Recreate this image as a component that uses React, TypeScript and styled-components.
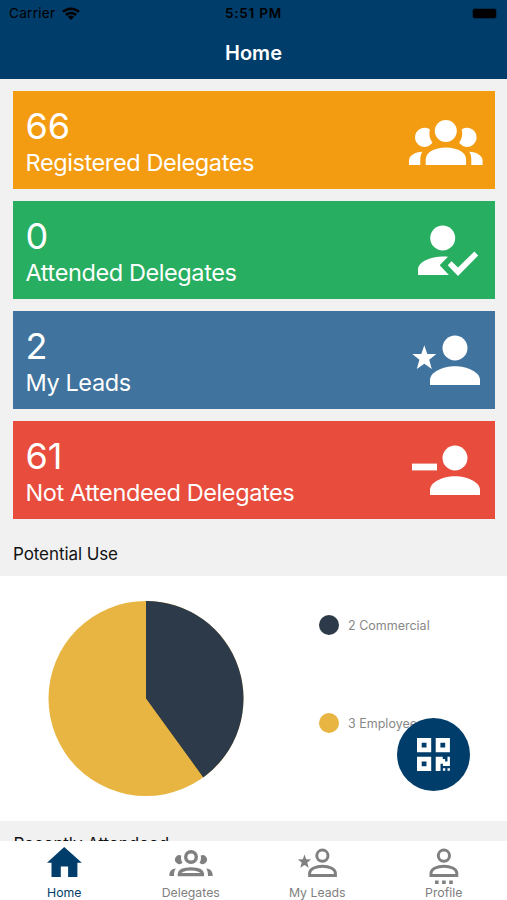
import React from "react";
import styled, { createGlobalStyle } from "styled-components";

const GlobalStyle = createGlobalStyle`
  * {
    box-sizing: border-box;
  }

  body {
    margin: 0;
    font-family: Inter, "Liberation Sans", sans-serif;
    background: #f1f1f1;
  }
`;

const PersonBody = "M23 55V50C23 42 36 36.2 48 36.2S73 42 73 50V55Z";

const GroupIcon = () => (
  <CardIcon viewBox="0 0 80 60">
    <circle cx="38.8" cy="21" r="11" />
    <path d="M18.7 55V49.5C18.7 42.5 27.7 37.6 38.9 37.6S59.1 42.5 59.1 49.5V55Z" />
    <path d="M22.3 19A9.6 9.6 0 1 0 24.8 33.6L25.3 32.4C22.7 28.6 21.6 24.3 22.9 19.4Z" />
    <path d="M55.3 19A9.6 9.6 0 1 1 52.8 33.6L52.3 32.4C54.9 28.6 56 24.3 54.7 19.4Z" />
    <path d="M2 55V50.5C2 45.5 8 42 15.3 41.7C13.6 44.2 13.3 47 13.3 50V55Z" />
    <path d="M75.6 55V50.5C75.6 45.5 69.6 42 62.3 41.7C64 44.2 64.3 47 64.3 50V55Z" />
  </CardIcon>
);

const AttendedIcon = () => (
  <CardIcon viewBox="0 0 80 60">
    <circle cx="35.7" cy="18" r="12.5" />
    <path d="M11 55V50C11 41.5 24 35.8 41 36.7L32.7 45.3L41.9 55Z" />
    <path d="M44.6 41.2L51 47.4L67.3 31.6L71.2 35.5L51 56L40.7 45.3Z" />
  </CardIcon>
);

const LeadsIcon = () => (
  <CardIcon viewBox="0 0 80 60">
    <circle cx="48" cy="18" r="12.5" />
    <path d={PersonBody} />
    <path d="M17.3 15.3L20.3 23.9L29.3 24.1L22.2 29.7L24.8 39.1L17.3 33.7L9.8 39.1L12.4 29.7L5.3 24.1L14.3 23.9Z" />
  </CardIcon>
);

const NotAttendedIcon = () => (
  <CardIcon viewBox="0 0 80 60">
    <circle cx="48" cy="18" r="12.5" />
    <path d={PersonBody} />
    <rect x="5" y="23.6" width="25" height="6.8" />
  </CardIcon>
);

const HomeTabIcon = () => (
  <TabIcon viewBox="0 0 48 40">
    <path d="M24.2 2L41.8 17.7H37.4V32H28.1V21.4H20.8V32H11.5V17.7H7Z" />
  </TabIcon>
);

const DelegatesTabIcon = () => (
  <TabIcon viewBox="0 0 48 40">
    <circle cx="24" cy="12" r="5.3" fill="none" stroke="currentColor" strokeWidth="3.4" />
    <path
      d="M12.3 29.6V28.6C12.7 25.7 17.7 23.9 23.9 23.9S35.1 25.7 35.5 28.6V29.6Z"
      fill="none"
      stroke="currentColor"
      strokeWidth="3.2"
    />
    <path d="M14.3 10.4A4.5 4.5 0 1 0 15.6 17.8C14.1 15.6 13.6 13 14.3 10.4Z" />
    <path d="M33.7 10.4A4.5 4.5 0 1 1 32.4 17.8C33.9 15.6 34.4 13 33.7 10.4Z" />
    <path d="M2.4 31V29.4C2.4 26 5.1 23.6 8.9 23.4C7.2 25.3 7 28 7 31Z" />
    <path d="M45.6 31V29.4C45.6 26 42.9 23.6 39.1 23.4C40.8 25.3 41 28 41 31Z" />
  </TabIcon>
);

const LeadsTabIcon = () => (
  <TabIcon viewBox="0 0 48 40">
    <circle cx="29.4" cy="10.7" r="5.6" fill="none" stroke="currentColor" strokeWidth="3" />
    <path
      d="M16.6 30.4V28C16.8 23.8 23 21.2 29.5 21.2S42.2 23.8 42.4 28V30.4Z"
      fill="none"
      stroke="currentColor"
      strokeWidth="3"
    />
    <path d="M11.5 9.6L13.2 14.3L18.2 14.5L14.3 17.6L15.7 22.8L11.5 19.9L7.3 22.8L8.7 17.6L4.8 14.5L9.8 14.3Z" />
  </TabIcon>
);

const ProfileTabIcon = () => (
  <TabIcon viewBox="0 0 48 40">
    <circle cx="23.9" cy="10.7" r="5.6" fill="none" stroke="currentColor" strokeWidth="3" />
    <path
      d="M11 30.4V28C11.2 23.8 17.4 21.2 23.9 21.2S36.6 23.8 36.8 28V30.4Z"
      fill="none"
      stroke="currentColor"
      strokeWidth="3"
    />
    <path d="M15 35.6h3.6v3.4H15zM22.1 35.6h3.6v3.4H22.1zM29.2 35.6h3.6v3.4H29.2z" />
  </TabIcon>
);

const cards = [
  { count: 66, label: "Registered Delegates", color: "#f39c12", icon: <GroupIcon /> },
  { count: 0, label: "Attended Delegates", color: "#27ae60", icon: <AttendedIcon /> },
  { count: 2, label: "My Leads", color: "#40739e", icon: <LeadsIcon /> },
  { count: 61, label: "Not Attendeed Delegates", color: "#e74c3c", icon: <NotAttendedIcon /> },
];

const tabs = [
  { label: "Home", icon: <HomeTabIcon />, active: true },
  { label: "Delegates", icon: <DelegatesTabIcon />, active: false },
  { label: "My Leads", icon: <LeadsTabIcon />, active: false },
  { label: "Profile", icon: <ProfileTabIcon />, active: false },
];

const App = () => {
  return (
    <Screen>
      <GlobalStyle />
      <Header>
        <StatusBar>
          <Carrier>
            Carrier
            <svg width="18" height="13" viewBox="0 0 18 13">
              <g fill="none" stroke="#000" strokeWidth="2.5">
                <path d="M1 4.9A11.6 11.6 0 0 1 17 4.9" />
                <path d="M3.9 8A7.4 7.4 0 0 1 14.1 8" />
              </g>
              <path d="M9 13L5.9 9.8A4.4 4.4 0 0 1 12.1 9.8Z" />
            </svg>
          </Carrier>
          <Time>5:51 PM</Time>
          <BatteryWrap>
            <Battery />
          </BatteryWrap>
        </StatusBar>
        <Title>Home</Title>
      </Header>

      <Content>
        <CardList>
          {cards.map((card) => (
            <Card key={card.label} $color={card.color}>
              <div>
                <Count>{card.count}</Count>
                <CardLabel>{card.label}</CardLabel>
              </div>
              {card.icon}
            </Card>
          ))}
        </CardList>

        <SectionTitle>Potential Use</SectionTitle>
        <ChartPanel>
          <svg width="196" height="196" viewBox="-98 -98.5 196 196">
            <circle r="97.5" fill="#e8b543" />
            <path d="M0 0V-97.5A97.5 97.5 0 0 1 57.3 78.9Z" fill="#2d3a49" />
          </svg>
          <Legend>
            <LegendItem>
              <Dot $color="#2d3a49" />
              <LegendLabel>2 Commercial</LegendLabel>
            </LegendItem>
            <LegendItem>
              <Dot $color="#e8b543" />
              <LegendLabel>3 Employee</LegendLabel>
            </LegendItem>
          </Legend>
        </ChartPanel>
        <SectionTitle $compact>Recently Attendeed</SectionTitle>
      </Content>

      <ScanButton aria-label="Scan">
        <svg width="33" height="33" viewBox="0 0 33 33" fill="#fff">
          <path
            fillRule="evenodd"
            d="M0 0h14.2v14.2H0zM4.7 4.7v4.8h4.8V4.7zM18.7 0h14.2v14.2H18.7zM23.4 4.7v4.8h4.8V4.7zM0 18.7h14.2v14.2H0zM4.7 23.4v4.8h4.8v-4.8z"
          />
          <path d="M18.7 18.7h7v2.3h2.4v2.4h2.4v-4.7h2.4v9.4h-7v-2.4h-2.4v7.2h-4.8zM25.9 30.3h2.4v2.4h-2.4zM30.5 30.3h2.4v2.4h-2.4z" />
        </svg>
      </ScanButton>

      <TabBar>
        {tabs.map((tab) => (
          <Tab key={tab.label} $active={tab.active}>
            {tab.icon}
            <TabLabel>{tab.label}</TabLabel>
          </Tab>
        ))}
      </TabBar>
    </Screen>
  );
};

const Screen = styled.div`
  position: relative;
  display: flex;
  flex-direction: column;
  width: 507px;
  height: 900px;
  overflow: hidden;
  background: #f1f1f1;
`;

const Header = styled.header`
  flex: none;
  height: 79px;
  background: #003d6a;
`;

const StatusBar = styled.div`
  display: grid;
  grid-template-columns: 1fr auto 1fr;
  align-items: center;
  height: 27px;
  padding: 0 10px 0 9px;
  color: #000;
  font-size: 13.5px;
  line-height: 27px;
`;

const Carrier = styled.div`
  display: flex;
  align-items: center;
  gap: 6.5px;
  letter-spacing: 0.3px;
`;

const Time = styled.div`
  padding-left: 1px;
  font-weight: 600;
  letter-spacing: 0.8px;
`;

const BatteryWrap = styled.div`
  display: flex;
  justify-content: flex-end;
`;

const Battery = styled.div`
  width: 25px;
  height: 11px;
  border: 1px solid #002c4e;
  border-radius: 3px;
  background: #000;
`;

const Title = styled.h1`
  margin: 0;
  color: #fff;
  font-size: 20px;
  font-weight: 600;
  line-height: 52px;
  text-align: center;
`;

const Content = styled.main`
  flex: 1;
  min-height: 0;
  overflow: hidden;
`;

const CardList = styled.div`
  display: flex;
  flex-direction: column;
  gap: 12.6px;
  padding: 12.4px 12.5px 0 13px;
`;

const Card = styled.div<{ $color: string }>`
  display: flex;
  justify-content: space-between;
  height: 97.4px;
  padding: 14px 7.5px 0 12.5px;
  color: #fff;
  background: ${(props) => props.$color};
`;

const Count = styled.div`
  font-size: 36px;
  line-height: 42px;
`;

const CardLabel = styled.div`
  font-size: 23.5px;
  line-height: 31px;
  letter-spacing: -0.4px;
`;

const CardIcon = styled.svg`
  flex: none;
  width: 80px;
  height: 60px;
  margin-top: 4.6px;
  fill: #fff;
`;

const SectionTitle = styled.h2<{ $compact?: boolean }>`
  height: 57px;
  margin: 0;
  padding: ${(props) => (props.$compact ? "0 13.5px" : "7.5px 13px 0")};
  color: #111;
  font-size: 17px;
  font-weight: 400;
  line-height: ${(props) => (props.$compact ? "46px" : "57px")};
  letter-spacing: -0.08px;
`;

const ChartPanel = styled.div`
  display: flex;
  align-items: center;
  height: 245px;
  padding-left: 48px;
  background: #fff;
`;

const Legend = styled.div`
  display: flex;
  flex-direction: column;
  gap: 78px;
  margin: 0 0 49px 74.5px;
`;

const LegendItem = styled.div`
  display: flex;
  align-items: center;
  height: 20px;
`;

const LegendLabel = styled.span`
  padding-top: 2px;
  color: #888;
  font-size: 12.5px;
`;

const Dot = styled.span<{ $color: string }>`
  width: 20px;
  height: 20px;
  margin-right: 9.5px;
  border-radius: 50%;
  background: ${(props) => props.$color};
`;

const ScanButton = styled.button`
  position: absolute;
  right: 36.7px;
  bottom: 108.7px;
  display: flex;
  align-items: center;
  justify-content: center;
  width: 73.4px;
  height: 73.4px;
  padding: 0;
  border: none;
  border-radius: 50%;
  background: #003d6a;
`;

const TabBar = styled.nav`
  display: flex;
  flex: none;
  height: 59px;
  padding-left: 1px;
  background: #fff;
`;

const Tab = styled.div<{ $active: boolean }>`
  display: flex;
  flex: 1;
  flex-direction: column;
  align-items: center;
  padding-top: 4px;
  color: ${(props) => (props.$active ? "#003d6a" : "#808080")};
`;

const TabIcon = styled.svg`
  width: 48px;
  height: 40px;
  fill: currentColor;
`;

const TabLabel = styled.span`
  font-size: 12.3px;
  line-height: 15px;
`;

export default App;
